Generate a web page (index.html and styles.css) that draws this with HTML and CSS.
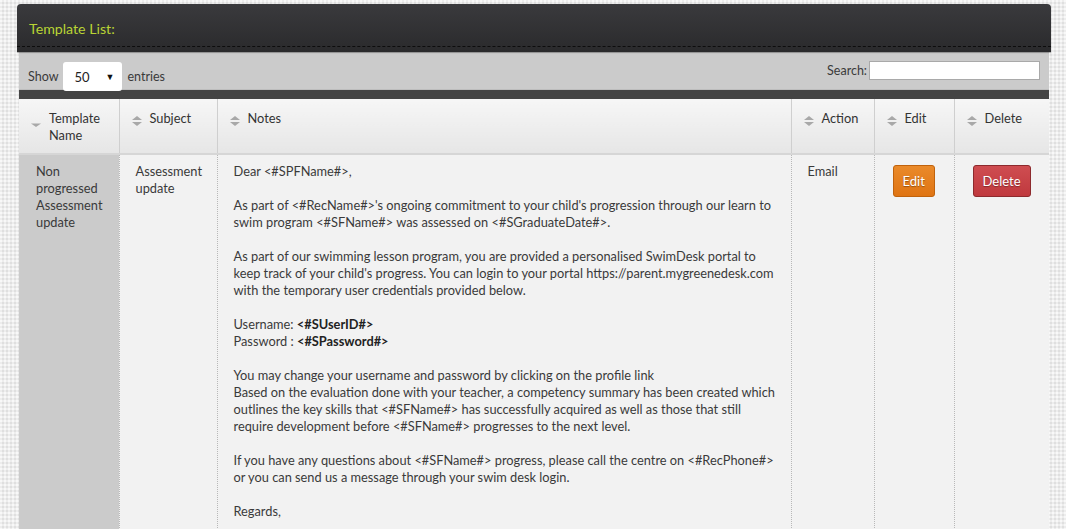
FILE: index.html
```html
<!DOCTYPE html>
<html>
<head>
<meta charset="utf-8">
<title>Template List</title>
<link rel="stylesheet" href="styles.css">
</head>
<body>
<div class="page">
  <div class="panel-head">
    <h2 class="panel-title">Template List:</h2>
  </div>
  <div class="panel-body">
    <div class="controls">
      <label class="length">Show
        <span class="select"><span class="select-val">50</span><span class="select-caret">&#9660;</span></span>
        entries</label>
      <label class="search">Search:<span class="search-input"></span></label>
    </div>
    <div class="strip"></div>
    <table class="grid">
      <colgroup>
        <col class="c1"><col class="c2"><col class="c3"><col class="c4"><col class="c5"><col class="c6">
      </colgroup>
      <thead>
        <tr>
          <th><span class="sort"><svg width="10" height="14" viewBox="0 0 10 14"><path d="M0 9.5h10l-5 3.5z" fill="#a8a8a8"/></svg></span><span class="th-text">Template<br>Name</span></th>
          <th><span class="sort"><svg width="10" height="14" viewBox="0 0 10 14"><path d="M0 6l5-4 5 4z" fill="#a8a8a8"/><path d="M0 8h10l-5 4z" fill="#a8a8a8"/></svg></span><span class="th-text">Subject</span></th>
          <th><span class="sort"><svg width="10" height="14" viewBox="0 0 10 14"><path d="M0 6l5-4 5 4z" fill="#a8a8a8"/><path d="M0 8h10l-5 4z" fill="#a8a8a8"/></svg></span><span class="th-text">Notes</span></th>
          <th><span class="sort"><svg width="10" height="14" viewBox="0 0 10 14"><path d="M0 6l5-4 5 4z" fill="#a8a8a8"/><path d="M0 8h10l-5 4z" fill="#a8a8a8"/></svg></span><span class="th-text">Action</span></th>
          <th><span class="sort"><svg width="10" height="14" viewBox="0 0 10 14"><path d="M0 6l5-4 5 4z" fill="#a8a8a8"/><path d="M0 8h10l-5 4z" fill="#a8a8a8"/></svg></span><span class="th-text">Edit</span></th>
          <th><span class="sort"><svg width="10" height="14" viewBox="0 0 10 14"><path d="M0 6l5-4 5 4z" fill="#a8a8a8"/><path d="M0 8h10l-5 4z" fill="#a8a8a8"/></svg></span><span class="th-text">Delete</span></th>
        </tr>
      </thead>
      <tbody>
        <tr>
          <td class="sorted">Non<br>progressed<br>Assessment<br>update</td>
          <td>Assessment<br>update</td>
          <td class="notes">Dear &lt;#SPFName#&gt;,<br><br>As part of &lt;#RecName#&gt;'s ongoing commitment to your child's progression through our learn to<br>swim program &lt;#SFName#&gt; was assessed on &lt;#SGraduateDate#&gt;.<br><br>As part of our swimming lesson program, you are provided a personalised SwimDesk portal to<br>keep track of your child's progress. You can login to your portal https://parent.mygreenedesk.com<br>with the temporary user credentials provided below.<br><br>Username: <b>&lt;#SUserID#&gt;</b><br>Password : <b>&lt;#SPassword#&gt;</b><br><br>You may change your username and password by clicking on the profile link<br>Based on the evaluation done with your teacher, a competency summary has been created which<br>outlines the key skills that &lt;#SFName#&gt; has successfully acquired as well as those that still<br>require development before &lt;#SFName#&gt; progresses to the next level.<br><br>If you have any questions about &lt;#SFName#&gt; progress, please call the centre on &lt;#RecPhone#&gt;<br>or you can send us a message through your swim desk login.<br><br>Regards,</td>
          <td>Email</td>
          <td class="btn-cell"><a class="btn btn-edit">Edit</a></td>
          <td class="btn-cell"><a class="btn btn-delete">Delete</a></td>
        </tr>
      </tbody>
    </table>
  </div>
</div>
</body>
</html>
```

FILE: styles.css
```css
html, body {
  margin: 0;
  padding: 0;
}
body {
  font-family: "Lato", "Open Sans", sans-serif;
  font-size: 13px;
  color: #3a3a3a;
  background-color: #ededed;
  background-image:
    radial-gradient(circle at 1px 1px, #f8f8f8 0.8px, transparent 1.2px),
    radial-gradient(circle at 3px 3px, #dedede 0.7px, transparent 1.1px);
  background-size: 4px 4px, 4px 4px;
  height: 529px;
  overflow: hidden;
}
.page {
  padding: 4px 15px 0 17px;
}
.panel-head {
  height: 48px;
  border-radius: 4px 4px 0 0;
  background: linear-gradient(#3a3a3d, #2a2a2c);
  box-sizing: border-box;
  padding: 0 12px;
  display: flex;
  align-items: center;
  position: relative;
  box-shadow: 0 1px 1px rgba(0,0,0,0.3);
}
.panel-head::after {
  content: "";
  position: absolute;
  left: 0;
  right: 0;
  bottom: 5px;
  border-bottom: 1px dashed #0d0d0d;
}
.panel-title {
  margin: 0;
  font-weight: normal;
  font-size: 14.2px;
  color: #b9d434;
}
.panel-body {
  margin: 0 2px;
  background: #f2f2f2;
}
.controls {
  height: 38px;
  background: #cbcbcb;
  display: flex;
  justify-content: space-between;
  align-items: flex-start;
  padding: 0 9px;
  box-sizing: border-box;
  border-bottom: 1px solid #bdbdbd;
}
.length {
  display: flex;
  align-items: center;
  gap: 5px;
  margin-top: 10px;
  height: 29px;
  font-size: 12.5px;
}
.select {
  width: 59px;
  height: 29px;
  background: #fff;
  border-radius: 3px;
  display: flex;
  align-items: center;
  justify-content: space-between;
  padding: 0 8px 0 11px;
  box-sizing: border-box;
  color: #222;
  font-size: 13px;
}
.select-caret {
  font-size: 9px;
  color: #111;
}
.search {
  display: flex;
  align-items: center;
  margin-top: 9px;
  gap: 2px;
  font-size: 12.5px;
}
.search-input {
  width: 169px;
  height: 17px;
  border: 1px solid #a9a9a9;
  background: #fff;
}
.strip {
  height: 9px;
  background: #444;
}
.grid {
  width: 1030px;
  border-collapse: collapse;
  table-layout: fixed;
}
.c1 { width: 100px; }
.c2 { width: 98px; }
.c3 { width: 574px; }
.c4 { width: 83px; }
.c5 { width: 80px; }
.c6 { width: 95px; }
.grid th {
  height: 55px;
  box-sizing: border-box;
  background: linear-gradient(#f6f6f6, #e6e6e6);
  border-left: 1px solid #cfcfcf;
  border-bottom: 2px solid #d6d6d6;
  font-weight: normal;
  text-align: left;
  vertical-align: top;
  padding: 11px 6px 0 12px;
  font-size: 12.8px;
  line-height: 17px;
  color: #333;
}
.grid th:first-child { border-left: none; }
.grid th .sort {
  display: inline-block;
  vertical-align: top;
  width: 10px;
  margin-top: 4px;
  margin-right: 8px;
}
.grid th .sort svg { display: block; }
.grid th .th-text {
  display: inline-block;
  vertical-align: top;
  text-align: left;
}
.grid td {
  vertical-align: top;
  padding: 8px 12px 40px 16px;
  line-height: 17px;
  font-size: 12.8px;
  border-left: 1px dotted #b8b8b8;
  background: #f2f2f2;
  color: #3a3a3a;
}
.grid td:first-child { border-left: none; }
.grid td.sorted {
  background: #cbcbcb;
  padding-left: 17px;
}
.grid td.notes {
  padding-left: 16px;
  white-space: nowrap;
}
.grid td b {
  font-weight: bold;
  color: #222;
}
.btn-cell {
  text-align: left;
}
.grid td.btn-cell { padding: 10px 0 0 18px; }
.btn {
  display: inline-block;
  height: 32px;
  box-sizing: border-box;
  line-height: 30px;
  padding: 0 9px;
  border-radius: 3px;
  color: #fff;
  font-size: 13px;
  text-shadow: 0 1px 1px rgba(0,0,0,0.35);
}
.btn-edit {
  background: linear-gradient(#ea8a2a, #df7413);
  border: 1px solid #c0620c;
}
.btn-delete {
  background: linear-gradient(#cf4d51, #c0393e);
  border: 1px solid #8d2a2d;
}
```
